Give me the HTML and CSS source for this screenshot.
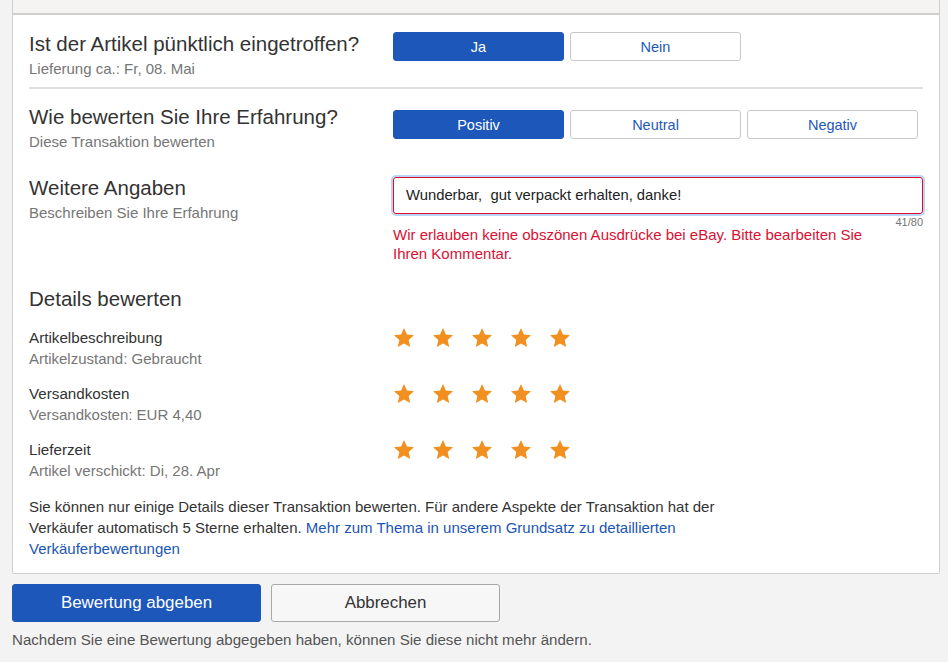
FILE: index.html
```html
<!DOCTYPE html>
<html lang="de">
<head>
<meta charset="utf-8">
<title>Bewertung abgeben</title>
<link rel="stylesheet" href="styles.css">
</head>
<body>
<div class="wrap">
  <div class="topbox"></div>
  <div class="card">
    <div class="row row-first">
      <div class="label">
        <div class="title">Ist der Artikel pünktlich eingetroffen?</div>
        <div class="sub">Lieferung ca.: Fr, 08. Mai</div>
      </div>
      <div class="control btns btns-first">
        <button class="btn sel">Ja</button>
        <button class="btn">Nein</button>
      </div>
    </div>
    <div class="row row-second">
      <div class="label">
        <div class="title">Wie bewerten Sie Ihre Erfahrung?</div>
        <div class="sub">Diese Transaktion bewerten</div>
      </div>
      <div class="control btns btns-second">
        <button class="btn sel">Positiv</button>
        <button class="btn">Neutral</button>
        <button class="btn">Negativ</button>
      </div>
    </div>
    <div class="row row-third">
      <div class="label">
        <div class="title">Weitere Angaben</div>
        <div class="sub">Beschreiben Sie Ihre Erfahrung</div>
      </div>
      <div class="control">
        <div class="textbox">Wunderbar,&nbsp; gut verpackt erhalten, danke!</div>
        <div class="counter">41/80</div>
        <div class="error">Wir erlauben keine obszönen Ausdrücke bei eBay. Bitte bearbeiten Sie<br>Ihren Kommentar.</div>
      </div>
    </div>
    <h2 class="section">Details bewerten</h2>
    <div class="detail">
      <div class="label">
        <div class="dtitle">Artikelbeschreibung</div>
        <div class="sub">Artikelzustand: Gebraucht</div>
      </div>
      <div class="stars">
        <svg class="star" viewBox="0 0 24 24"><path d="M12 1.2l3.2 7.1 7.7.8-5.8 5.2 1.7 7.6L12 18l-6.8 3.9 1.7-7.6-5.8-5.2 7.7-.8z"/></svg>
        <svg class="star" viewBox="0 0 24 24"><path d="M12 1.2l3.2 7.1 7.7.8-5.8 5.2 1.7 7.6L12 18l-6.8 3.9 1.7-7.6-5.8-5.2 7.7-.8z"/></svg>
        <svg class="star" viewBox="0 0 24 24"><path d="M12 1.2l3.2 7.1 7.7.8-5.8 5.2 1.7 7.6L12 18l-6.8 3.9 1.7-7.6-5.8-5.2 7.7-.8z"/></svg>
        <svg class="star" viewBox="0 0 24 24"><path d="M12 1.2l3.2 7.1 7.7.8-5.8 5.2 1.7 7.6L12 18l-6.8 3.9 1.7-7.6-5.8-5.2 7.7-.8z"/></svg>
        <svg class="star" viewBox="0 0 24 24"><path d="M12 1.2l3.2 7.1 7.7.8-5.8 5.2 1.7 7.6L12 18l-6.8 3.9 1.7-7.6-5.8-5.2 7.7-.8z"/></svg>
      </div>
    </div>
    <div class="detail">
      <div class="label">
        <div class="dtitle">Versandkosten</div>
        <div class="sub">Versandkosten: EUR 4,40</div>
      </div>
      <div class="stars">
        <svg class="star" viewBox="0 0 24 24"><path d="M12 1.2l3.2 7.1 7.7.8-5.8 5.2 1.7 7.6L12 18l-6.8 3.9 1.7-7.6-5.8-5.2 7.7-.8z"/></svg>
        <svg class="star" viewBox="0 0 24 24"><path d="M12 1.2l3.2 7.1 7.7.8-5.8 5.2 1.7 7.6L12 18l-6.8 3.9 1.7-7.6-5.8-5.2 7.7-.8z"/></svg>
        <svg class="star" viewBox="0 0 24 24"><path d="M12 1.2l3.2 7.1 7.7.8-5.8 5.2 1.7 7.6L12 18l-6.8 3.9 1.7-7.6-5.8-5.2 7.7-.8z"/></svg>
        <svg class="star" viewBox="0 0 24 24"><path d="M12 1.2l3.2 7.1 7.7.8-5.8 5.2 1.7 7.6L12 18l-6.8 3.9 1.7-7.6-5.8-5.2 7.7-.8z"/></svg>
        <svg class="star" viewBox="0 0 24 24"><path d="M12 1.2l3.2 7.1 7.7.8-5.8 5.2 1.7 7.6L12 18l-6.8 3.9 1.7-7.6-5.8-5.2 7.7-.8z"/></svg>
      </div>
    </div>
    <div class="detail">
      <div class="label">
        <div class="dtitle">Lieferzeit</div>
        <div class="sub">Artikel verschickt: Di, 28. Apr</div>
      </div>
      <div class="stars">
        <svg class="star" viewBox="0 0 24 24"><path d="M12 1.2l3.2 7.1 7.7.8-5.8 5.2 1.7 7.6L12 18l-6.8 3.9 1.7-7.6-5.8-5.2 7.7-.8z"/></svg>
        <svg class="star" viewBox="0 0 24 24"><path d="M12 1.2l3.2 7.1 7.7.8-5.8 5.2 1.7 7.6L12 18l-6.8 3.9 1.7-7.6-5.8-5.2 7.7-.8z"/></svg>
        <svg class="star" viewBox="0 0 24 24"><path d="M12 1.2l3.2 7.1 7.7.8-5.8 5.2 1.7 7.6L12 18l-6.8 3.9 1.7-7.6-5.8-5.2 7.7-.8z"/></svg>
        <svg class="star" viewBox="0 0 24 24"><path d="M12 1.2l3.2 7.1 7.7.8-5.8 5.2 1.7 7.6L12 18l-6.8 3.9 1.7-7.6-5.8-5.2 7.7-.8z"/></svg>
        <svg class="star" viewBox="0 0 24 24"><path d="M12 1.2l3.2 7.1 7.7.8-5.8 5.2 1.7 7.6L12 18l-6.8 3.9 1.7-7.6-5.8-5.2 7.7-.8z"/></svg>
      </div>
    </div>
    <p class="note">Sie können nur einige Details dieser Transaktion bewerten. Für andere Aspekte der Transaktion hat der<br>Verkäufer automatisch 5 Sterne erhalten. <a href="#">Mehr zum Thema in unserem Grundsatz zu detaillierten<br>Verkäuferbewertungen</a></p>
  </div>
  <div class="actions">
    <button class="action primary">Bewertung abgeben</button>
    <button class="action secondary">Abbrechen</button>
  </div>
  <p class="footnote">Nachdem Sie eine Bewertung abgegeben haben, können Sie diese nicht mehr ändern.</p>
</div>
</body>
</html>
```
FILE: styles.css
```css
* { box-sizing: border-box; }
html, body { margin: 0; padding: 0; }
body {
  background: #f3f3f3;
  font-family: "Liberation Sans", Arial, sans-serif;
  color: #333;
}
.wrap {
  width: 928px;
  margin-left: 12px;
}
.topbox {
  height: 15px;
  background: #f5f4f3;
  border: 1px solid #cfcfcf;
  border-top: none;
  border-bottom: 2px solid #cfcfcf;
}
.card {
  background: #fff;
  border: 1px solid #cfcfcf;
  border-top: none;
  border-radius: 0 0 2px 2px;
  padding: 0 16px 14px 16px;
}
.row {
  display: grid;
  grid-template-columns: 364px 530px;
}
.row-first {
  padding-top: 17px;
  padding-bottom: 9px;
  border-bottom: 2px solid #dedede;
}
.row-second {
  padding-top: 16px;
}
.row-third {
  padding-top: 25px;
}
.title {
  font-size: 20.5px;
  line-height: 24px;
  color: #333;
}
.sub {
  font-size: 15px;
  line-height: 18px;
  color: #767676;
  margin-top: 4px;
}
.btns {
  display: flex;
  gap: 6px;
}
.btns-first { padding-top: 0; }
.btns-second { padding-top: 5px; }
.btn {
  width: 171px;
  height: 29px;
  border: 1px solid #c9c9c9;
  border-radius: 3px;
  background: #fff;
  color: #1d58b9;
  font-family: "Liberation Sans", Arial, sans-serif;
  font-size: 14.5px;
  padding: 0;
}
.btn.sel {
  background: #1c57b9;
  border-color: #1c57b9;
  color: #fff;
}
.textbox {
  height: 37px;
  margin-top: 1px;
  border: 1px solid #d90c2e;
  border-radius: 3px;
  box-shadow: 0 0 0 2px #b9d5f5;
  padding: 8px 12px;
  font-size: 14.8px;
  line-height: 19px;
  color: #222;
}
.counter {
  text-align: right;
  font-size: 11px;
  line-height: 13px;
  color: #767676;
  margin-top: 2px;
}
.error {
  font-size: 15px;
  line-height: 19px;
  color: #da1033;
  margin-top: -4px;
}
.section {
  margin: 24px 0 0 0;
  font-size: 20.5px;
  line-height: 24px;
  font-weight: normal;
  color: #333;
}
.detail {
  display: grid;
  grid-template-columns: 364px 530px;
  height: 56px;
}
.section + .detail { margin-top: 17px; }
.dtitle {
  font-size: 15.2px;
  line-height: 20px;
  color: #333;
}
.detail .sub { margin-top: 2px; }
.stars {
  display: flex;
  gap: 17px;
  margin-top: -1px;
}
.star {
  width: 22px;
  height: 22px;
  fill: #f18f20;
}
.note {
  margin: 0;
  font-size: 15px;
  line-height: 21px;
  color: #333;
}
.note a {
  color: #1a55b4;
  text-decoration: none;
}
.actions {
  display: flex;
  gap: 10px;
  margin-top: 10px;
}
.action {
  height: 38px;
  border-radius: 3px;
  font-family: "Liberation Sans", Arial, sans-serif;
  font-size: 16.9px;
  padding: 0;
}
.primary {
  width: 249px;
  background: #1c57b9;
  border: 1px solid #1c57b9;
  color: #fff;
}
.secondary {
  width: 229px;
  background: #f7f7f7;
  border: 1px solid #a8a8a8;
  color: #333;
}
.footnote {
  margin: 9px 0 0 0;
  font-size: 15.1px;
  line-height: 18px;
  color: #555;
}
```
